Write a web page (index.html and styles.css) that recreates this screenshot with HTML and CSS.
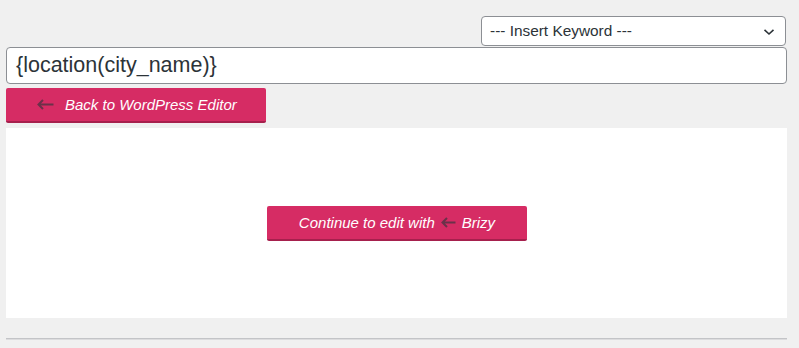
FILE: index.html
```html
<!DOCTYPE html>
<html>
<head>
<meta charset="utf-8">
<link rel="stylesheet" href="styles.css">
</head>
<body>
<div class="wrap">
  <div class="kw-row">
    <div class="select">
      <span>--- Insert Keyword ---</span>
      <svg class="chev" width="12" height="8" viewBox="0 0 12 8"><path d="M1.5 1.8 L6 6 L10.5 1.8" fill="none" stroke="#2c3338" stroke-width="1.6"/></svg>
    </div>
  </div>
  <div class="title-input">{location(city_name)}</div>
  <div class="btn back">
    <svg class="arr" width="17" height="11" viewBox="0 0 17 11"><path d="M16.5 5.5 H1.5 M6 1 L1.5 5.5 L6 10" fill="none" stroke="#6b3149" stroke-width="2"/></svg>
    <span>Back to WordPress Editor</span>
  </div>
  <div class="panel">
    <div class="btn cont">
      <span>Continue to edit with</span>
      <svg class="arr" width="15" height="11" viewBox="0 0 15 11"><path d="M14.5 5.5 H1.5 M6 1 L1.5 5.5 L6 10" fill="none" stroke="#6b3149" stroke-width="2"/></svg>
      <span>Brizy</span>
    </div>
  </div>
  <div class="rule"></div>
</div>
</body>
</html>
```
FILE: styles.css
```css
html, body { margin: 0; padding: 0; background: #f0f0f0; }
body { font-family: "Liberation Sans", Arial, sans-serif; color: #2c3338; }
.wrap { padding: 16px 12px 0 6px; display: flex; flex-direction: column; }
.kw-row { display: flex; justify-content: flex-end; padding-right: 1px; }
.select {
  width: 305px; height: 30px; box-sizing: border-box;
  border: 1px solid #8c8f94; border-radius: 4px; background: #fff;
  display: flex; align-items: center; justify-content: space-between;
  padding: 0 10px 0 8px; font-size: 15.4px; color: #2c3338;
}
.chev { margin-top: 1px; }
.title-input {
  margin-top: 1px; height: 37px; box-sizing: border-box;
  border: 1px solid #8c8f94; border-radius: 4px; background: #fff;
  display: flex; align-items: center; padding-left: 9px; padding-bottom: 1px;
  font-size: 21.5px; color: #2c3338;
}
.btn {
  width: 260px; height: 35px; box-sizing: border-box;
  background: #d62c64; border-bottom: 2px solid #a6204d; border-radius: 2px;
  display: flex; align-items: center; color: #fff; font-style: italic; font-size: 15px;
}
.btn .arr { flex: none; }
.back { margin-top: 4px; padding-left: 31px; gap: 11px; }
.cont { justify-content: center; gap: 6px; }
.panel {
  margin-top: 5px; height: 190px; background: #fff;
  display: flex; align-items: center; justify-content: center; padding-left: 1px;
}
.rule { margin-top: 20px; height: 1px; background: #c3c4c7; border-bottom: 1px solid #dcdcde; }
```
